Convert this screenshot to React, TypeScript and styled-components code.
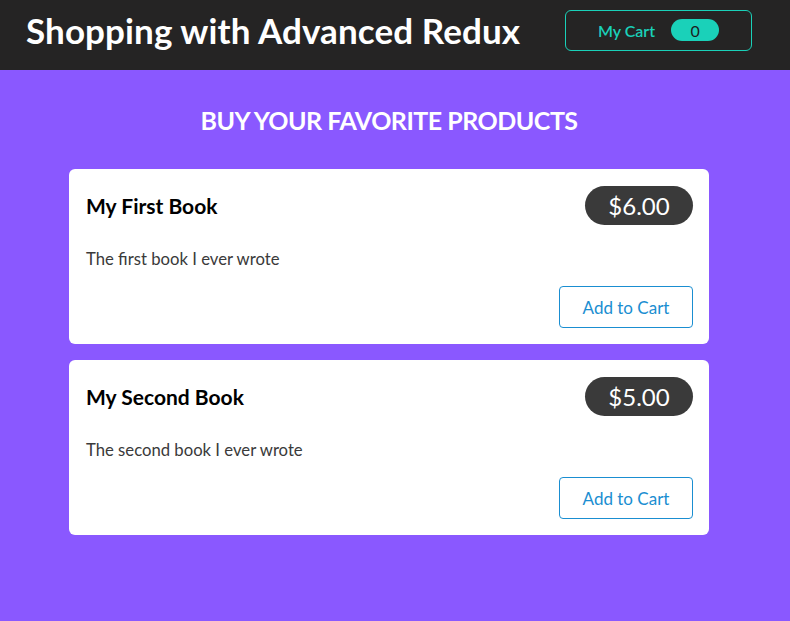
import React from "react";
import styled, { createGlobalStyle } from "styled-components";

const GlobalStyle = createGlobalStyle`
  * { box-sizing: border-box; }
  html, body { margin: 0; padding: 0; }
  body {
    background-color: #8a58ff;
    font-family: "Lato", "Open Sans", sans-serif;
    min-height: 621px;
  }
`;

const Header = styled.header`
  height: 70px;
  display: flex;
  justify-content: space-between;
  align-items: center;
  padding: 0 38px 10px 26px;
  background-color: #252424;
`;

const Title = styled.h1`
  margin: 0;
  color: #ffffff;
  font-size: 35px;
  font-weight: 700;
  letter-spacing: 0.1px;
  line-height: 42px;
`;

const CartButton = styled.button`
  width: 187px;
  height: 41px;
  display: flex;
  align-items: center;
  justify-content: center;
  gap: 16px;
  background: transparent;
  border: 1px solid #1ad1b9;
  border-radius: 6px;
  color: #1ad1b9;
  font-family: inherit;
  font-size: 16px;
  font-weight: 600;
  cursor: pointer;
`;

const Badge = styled.span`
  display: inline-flex;
  align-items: center;
  justify-content: center;
  width: 48px;
  height: 22px;
  border-radius: 30px;
  background-color: #1ad1b9;
  color: #1d1d1d;
  font-size: 16px;
  font-weight: 400;
`;

const Main = styled.main`
  padding-right: 12px;
`;

const Products = styled.section`
  width: 640px;
  margin: 0 auto;
`;

const Heading = styled.h2`
  margin: 0;
  padding: 35px 0 34px;
  color: #ffffff;
  text-align: center;
  text-transform: uppercase;
  font-size: 25px;
  font-weight: 700;
  letter-spacing: -0.5px;
  line-height: 30px;
`;

const List = styled.ul`
  list-style: none;
  margin: 0;
  padding: 0;
  display: flex;
  flex-direction: column;
  gap: 16px;
`;

const Card = styled.li`
  background: #ffffff;
  border-radius: 6px;
  padding: 17px 16px 16px 17px;
`;

const ItemHeader = styled.header`
  display: flex;
  justify-content: space-between;
  align-items: center;
`;

const ItemTitle = styled.h3`
  margin: 0;
  font-size: 21px;
  font-weight: 700;
  color: #000000;
`;

const Price = styled.div`
  height: 39px;
  min-width: 108px;
  display: flex;
  align-items: center;
  justify-content: center;
  padding: 0 20px;
  border-radius: 30px;
  background-color: #3a3a3a;
  color: #ffffff;
  font-size: 24px;
  font-weight: 400;
`;

const Description = styled.p`
  margin: 22px 0 15px;
  line-height: 24px;
  font-size: 16.7px;
  color: #3a3a3a;
`;

const Actions = styled.div`
  display: flex;
  justify-content: flex-end;
`;

const AddButton = styled.button`
  width: 134px;
  height: 42px;
  background: transparent;
  border: 1px solid #1a8ed1;
  border-radius: 4px;
  color: #1a8ed1;
  font-family: inherit;
  font-size: 17px;
  cursor: pointer;
`;

const products = [
  { id: "p1", title: "My First Book", price: 6, description: "The first book I ever wrote" },
  { id: "p2", title: "My Second Book", price: 5, description: "The second book I ever wrote" },
];

export default function App() {
  return (
    <>
      <GlobalStyle />
      <Header>
        <Title>Shopping with Advanced Redux</Title>
        <CartButton>
          <span>My Cart</span>
          <Badge>0</Badge>
        </CartButton>
      </Header>
      <Main>
        <Products>
          <Heading>Buy your favorite products</Heading>
          <List>
            {products.map((p) => (
              <Card key={p.id}>
                <ItemHeader>
                  <ItemTitle>{p.title}</ItemTitle>
                  <Price>${p.price.toFixed(2)}</Price>
                </ItemHeader>
                <Description>{p.description}</Description>
                <Actions>
                  <AddButton>Add to Cart</AddButton>
                </Actions>
              </Card>
            ))}
          </List>
        </Products>
      </Main>
    </>
  );
}
